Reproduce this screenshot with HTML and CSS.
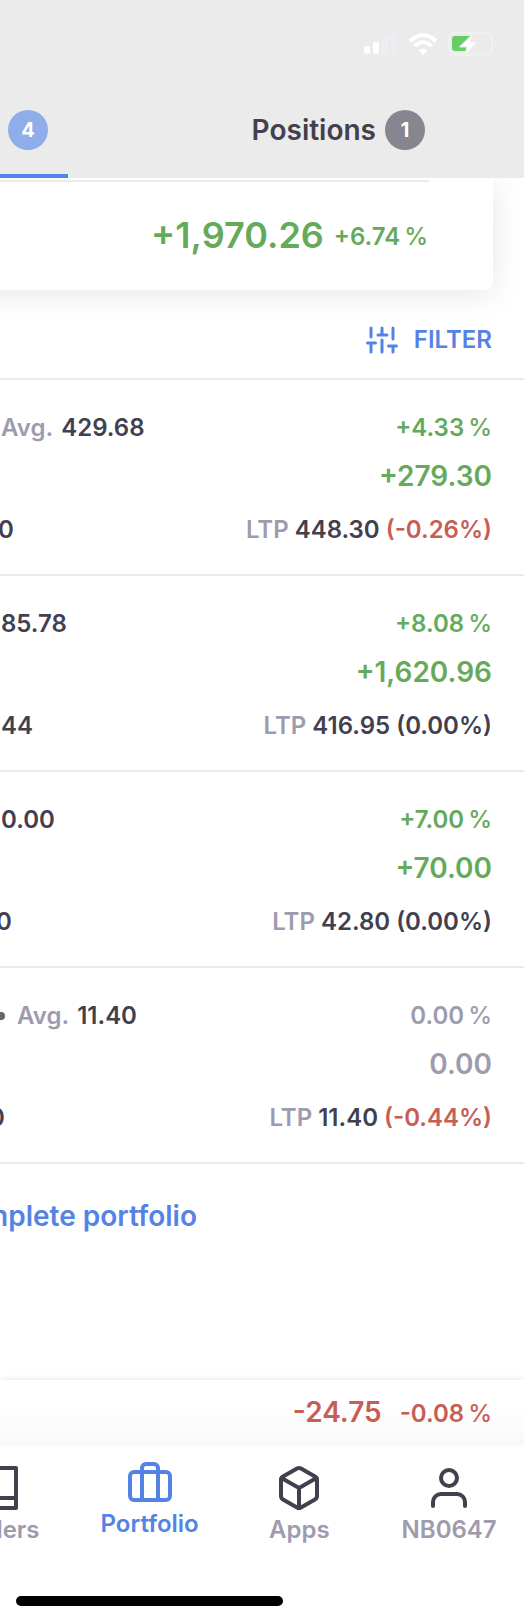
FILE: index.html
```html
<!DOCTYPE html>
<html lang="en">
<head>
<meta charset="utf-8">
<meta name="viewport" content="width=device-width, initial-scale=1">
<title>Portfolio</title>
<link rel="stylesheet" href="styles.css">
</head>
<body>
<div class="app">
  <header class="header">
    <div class="status">
      <svg width="34" height="22" viewBox="0 0 34 22" fill="#fff" aria-hidden="true"><rect x="0" y="13" width="6" height="8" rx="2"/><rect x="9" y="9" width="6" height="12" rx="2"/><g fill="#eeeef2"><rect x="18" y="4" width="6" height="17" rx="2"/><rect x="27" y="0" width="6" height="21" rx="2"/></g></svg>
      <svg width="30" height="22" viewBox="0 0 30 22" fill="none" stroke="#fff" stroke-width="4" aria-hidden="true"><path d="M2 8.2Q15-3.800 28 8.200"/><path d="M6.500 13Q15 5.500 23.500 13"/><path d="M15 22l-4.200-4.500Q15 13.800 19.200 17.500Z" fill="#fff" stroke="none"/></svg>
      <svg width="50" height="24" viewBox="0 0 50 24" aria-hidden="true"><rect x="1" y="1" width="43" height="21.500" rx="6" fill="none" stroke="#f1f1f4" stroke-width="2"/><path d="M46.500 8.500q3 3.500 0 7z" fill="#f1f1f4"/><path d="M7 4h16l-5 15H7a3 3 0 0 1-3-3V7a3 3 0 0 1 3-3z" fill="#67ce67"/><path d="M25.500 1L11.500 15h7.300L17 23.500 29.500 9.500h-7z" fill="#fff" stroke="#ebebeb" stroke-width="1"/></svg>
    </div>
    <nav class="tabs" aria-label="Portfolio sections">
      <button class="tab active" aria-label="Holdings 4"><span class="count">4</span></button>
      <button class="tab">Positions<span class="count">1</span></button>
    </nav>
  </header>
  <main class="content">
    <section class="card">
      <div class="summary"><span class="total">+1,970.26</span><span class="pct"><span>+6.74</span> <span class="sign">%</span></span></div>
    </section>
    <div class="toolbar">
      <button class="filter">
        <svg width="32" height="28" viewBox="0 0 32 28" fill="none" stroke="currentColor" stroke-width="3" stroke-linecap="round" aria-hidden="true"><path d="M5 2v9M5 17v9M1.500 17h8M16 2v7M12 9h9M16 14v12M27 2v11M27 20v6M22.500 20h8"/></svg>
        FILTER
      </button>
    </div>
    <section class="holdings">
      <article class="holding">
        <div class="left"><p><span class="label avg">Avg.</span> 429.68</p><p class="cut-1">0</p></div>
        <div class="right"><p class="pct up"><span>+4.33</span> <span class="sign">%</span></p><p class="pnl up">+279.30</p><p><span class="label">LTP</span> 448.30 <span class="down">(-0.26%)</span></p></div>
      </article>
      <article class="holding">
        <div class="left"><p>85.78</p><p>44</p></div>
        <div class="right"><p class="pct up"><span>+8.08</span> <span class="sign">%</span></p><p class="pnl up">+1,620.96</p><p><span class="label">LTP</span> 416.95 (0.00%)</p></div>
      </article>
      <article class="holding">
        <div class="left"><p>0.00</p><p class="cut-2">0</p></div>
        <div class="right"><p class="pct up"><span>+7.00</span> <span class="sign">%</span></p><p class="pnl up">+70.00</p><p><span class="label">LTP</span> 42.80 (0.00%)</p></div>
      </article>
      <article class="holding">
        <div class="left"><p class="dotted"><i class="dot"></i><span><span class="label avg">Avg.</span> 11.40</span></p><p class="cut-3">0</p></div>
        <div class="right"><p class="pct label"><span>0.00</span> <span class="sign">%</span></p><p class="pnl label">0.00</p><p><span class="label">LTP</span> 11.40 <span class="down">(-0.44%)</span></p></div>
      </article>
    </section>
    <a class="analyse" href="#portfolio">mplete portfolio</a>
  </main>
  <section class="day down"><span class="day-value">-24.75</span><span class="pct"><span>-0.08</span> <span class="sign">%</span></span></section>
  <nav class="bottom" aria-label="Main">
    <div class="items">
      <a href="#orders"><svg class="icon" viewBox="0 0 24 24"><path d="M4 19.500A2.500 2.500 0 0 1 6.500 17H20"/><path d="M6.500 2H20v20H6.500A2.500 2.500 0 0 1 4 19.500v-15A2.500 2.500 0 0 1 6.500 2z"/></svg>Orders</a>
      <a class="current" href="#portfolio"><svg class="icon" viewBox="0 0 24 24"><rect x="2" y="7" width="20" height="14" rx="2"/><path d="M16 21V5a2 2 0 0 0-2-2h-4a2 2 0 0 0-2 2v16"/></svg>Portfolio</a>
      <a href="#apps"><svg class="icon" viewBox="0 0 24 24"><path d="M21 16V8a2 2 0 0 0-1-1.730l-7-4a2 2 0 0 0-2 0l-7 4A2 2 0 0 0 3 8v8a2 2 0 0 0 1 1.730l7 4a2 2 0 0 0 2 0l7-4A2 2 0 0 0 21 16z"/><path d="M3.270 6.960L12 12.010l8.730-5.050M12 22.080V12"/></svg>Apps</a>
      <a href="#account"><svg class="icon" viewBox="0 0 24 24"><path d="M20 21v-2a4 4 0 0 0-4-4H8a4 4 0 0 0-4 4v2"/><circle cx="12" cy="7" r="4"/></svg>NB0647</a>
    </div>
    <div class="home"></div>
  </nav>
</div>
</body>
</html>
```
FILE: styles.css
```css
:root {
  --ink: #42404f;
  --muted: #9e9bae;
  --green: #65aa5b;
  --red: #c75e53;
  --blue: #5483e6;
  --line: #ebebeb;
}
* { box-sizing: border-box; }
body {
  margin: 0;
  background: #fff;
  color: var(--ink);
  font: 600 24px/32px Inter, "Liberation Sans", sans-serif;
}
p { margin: 0; }
button { font: inherit; color: inherit; background: none; border: 0; padding: 0; cursor: pointer; }
a { text-decoration: none; color: inherit; }
.app { display: flex; flex-direction: column; min-height: 100vh; overflow: hidden; }

.header { position: relative; z-index: 1; background: #ebebeb; }
.status { display: flex; justify-content: flex-end; align-items: center; gap: 10px; height: 86px; padding: 2px 26px 0 0; }
.tabs { display: flex; justify-content: space-between; padding-right: 79px; }
.tab { display: flex; align-items: center; gap: 9px; height: 92px; padding: 0 20px; font-size: 28px; border-bottom: 4px solid transparent; }
.tab.active { padding-left: 8px; border-color: var(--blue); }
.count { width: 40px; height: 40px; border-radius: 50%; background: #87858f; color: #fff; font-size: 20px; font-weight: 700; line-height: 40px; text-align: center; }
.active .count { background: #8eade9; }

.content { flex: 1; }
.card { margin: 0 31px 0 -64px; padding: 2px 64px 0 0; height: 112px; border-radius: 0 0 8px 8px; background: #fff; box-shadow: 0 4px 32px rgba(0, 0, 0, 0.1); }
.summary { display: flex; justify-content: flex-end; align-items: flex-end; gap: 10px; padding: 31px 1px 0 0; border-top: 2px solid var(--line); color: var(--green); }
.total { font-size: 36px; line-height: 44px; }
.summary .pct { line-height: 40px; }
.pct { display: flex; justify-content: flex-end; gap: 4px; }
.sign { font-weight: 500; }
.toolbar { display: flex; justify-content: flex-end; padding: 34px 32px 22px 0; border-bottom: 2px solid var(--line); }
.filter { display: flex; align-items: center; gap: 16px; color: var(--blue); }

.holding { display: flex; justify-content: space-between; padding: 32px 32px 28px 0; border-bottom: 2px solid var(--line); }
.left { display: flex; flex-direction: column; justify-content: space-between; padding-left: 1px; }
.right { text-align: right; }
.pnl { margin: 14px 0 20px; font-size: 28px; line-height: 36px; }
.label { color: var(--muted); }
.avg { margin-right: 2px; }
.up { color: var(--green); }
.down { color: var(--red); }
.cut-1 { margin-left: -3px; }
.cut-2 { margin-left: -5px; }
.cut-3 { margin-left: -12px; }
.dotted { display: flex; align-items: center; gap: 12px; margin-left: -4px; }
.dot { width: 8px; height: 8px; border-radius: 50%; background: #666; }
.analyse { display: block; margin: 34px 0 36px -17px; color: var(--blue); font-size: 28px; line-height: 36px; }

.day { display: flex; justify-content: flex-end; align-items: baseline; gap: 18px; height: 66px; padding: 14px 32px 0 0; background: linear-gradient(#fff 40%, #f9f9f9); box-shadow: 0 0 6px rgba(0, 0, 0, 0.12); }
.day-value { font-size: 28px; line-height: 36px; }
.bottom { position: relative; background: #fff; }
.items { display: grid; grid-template-columns: repeat(4, 1fr); margin-left: -75px; }
.items a { display: flex; flex-direction: column; align-items: center; gap: 4px; padding: 18px 0 52px; color: var(--muted); line-height: 28px; }
.items .current { padding: 12px 0 58px; color: var(--blue); }
.icon { width: 48px; height: 48px; fill: none; stroke: var(--ink); stroke-width: 2; stroke-linecap: round; stroke-linejoin: round; }
.current .icon { stroke: currentColor; }
.home { width: 51%; height: 10px; margin: 0 0 15px 16px; border-radius: 5px; background: #000; }
```
